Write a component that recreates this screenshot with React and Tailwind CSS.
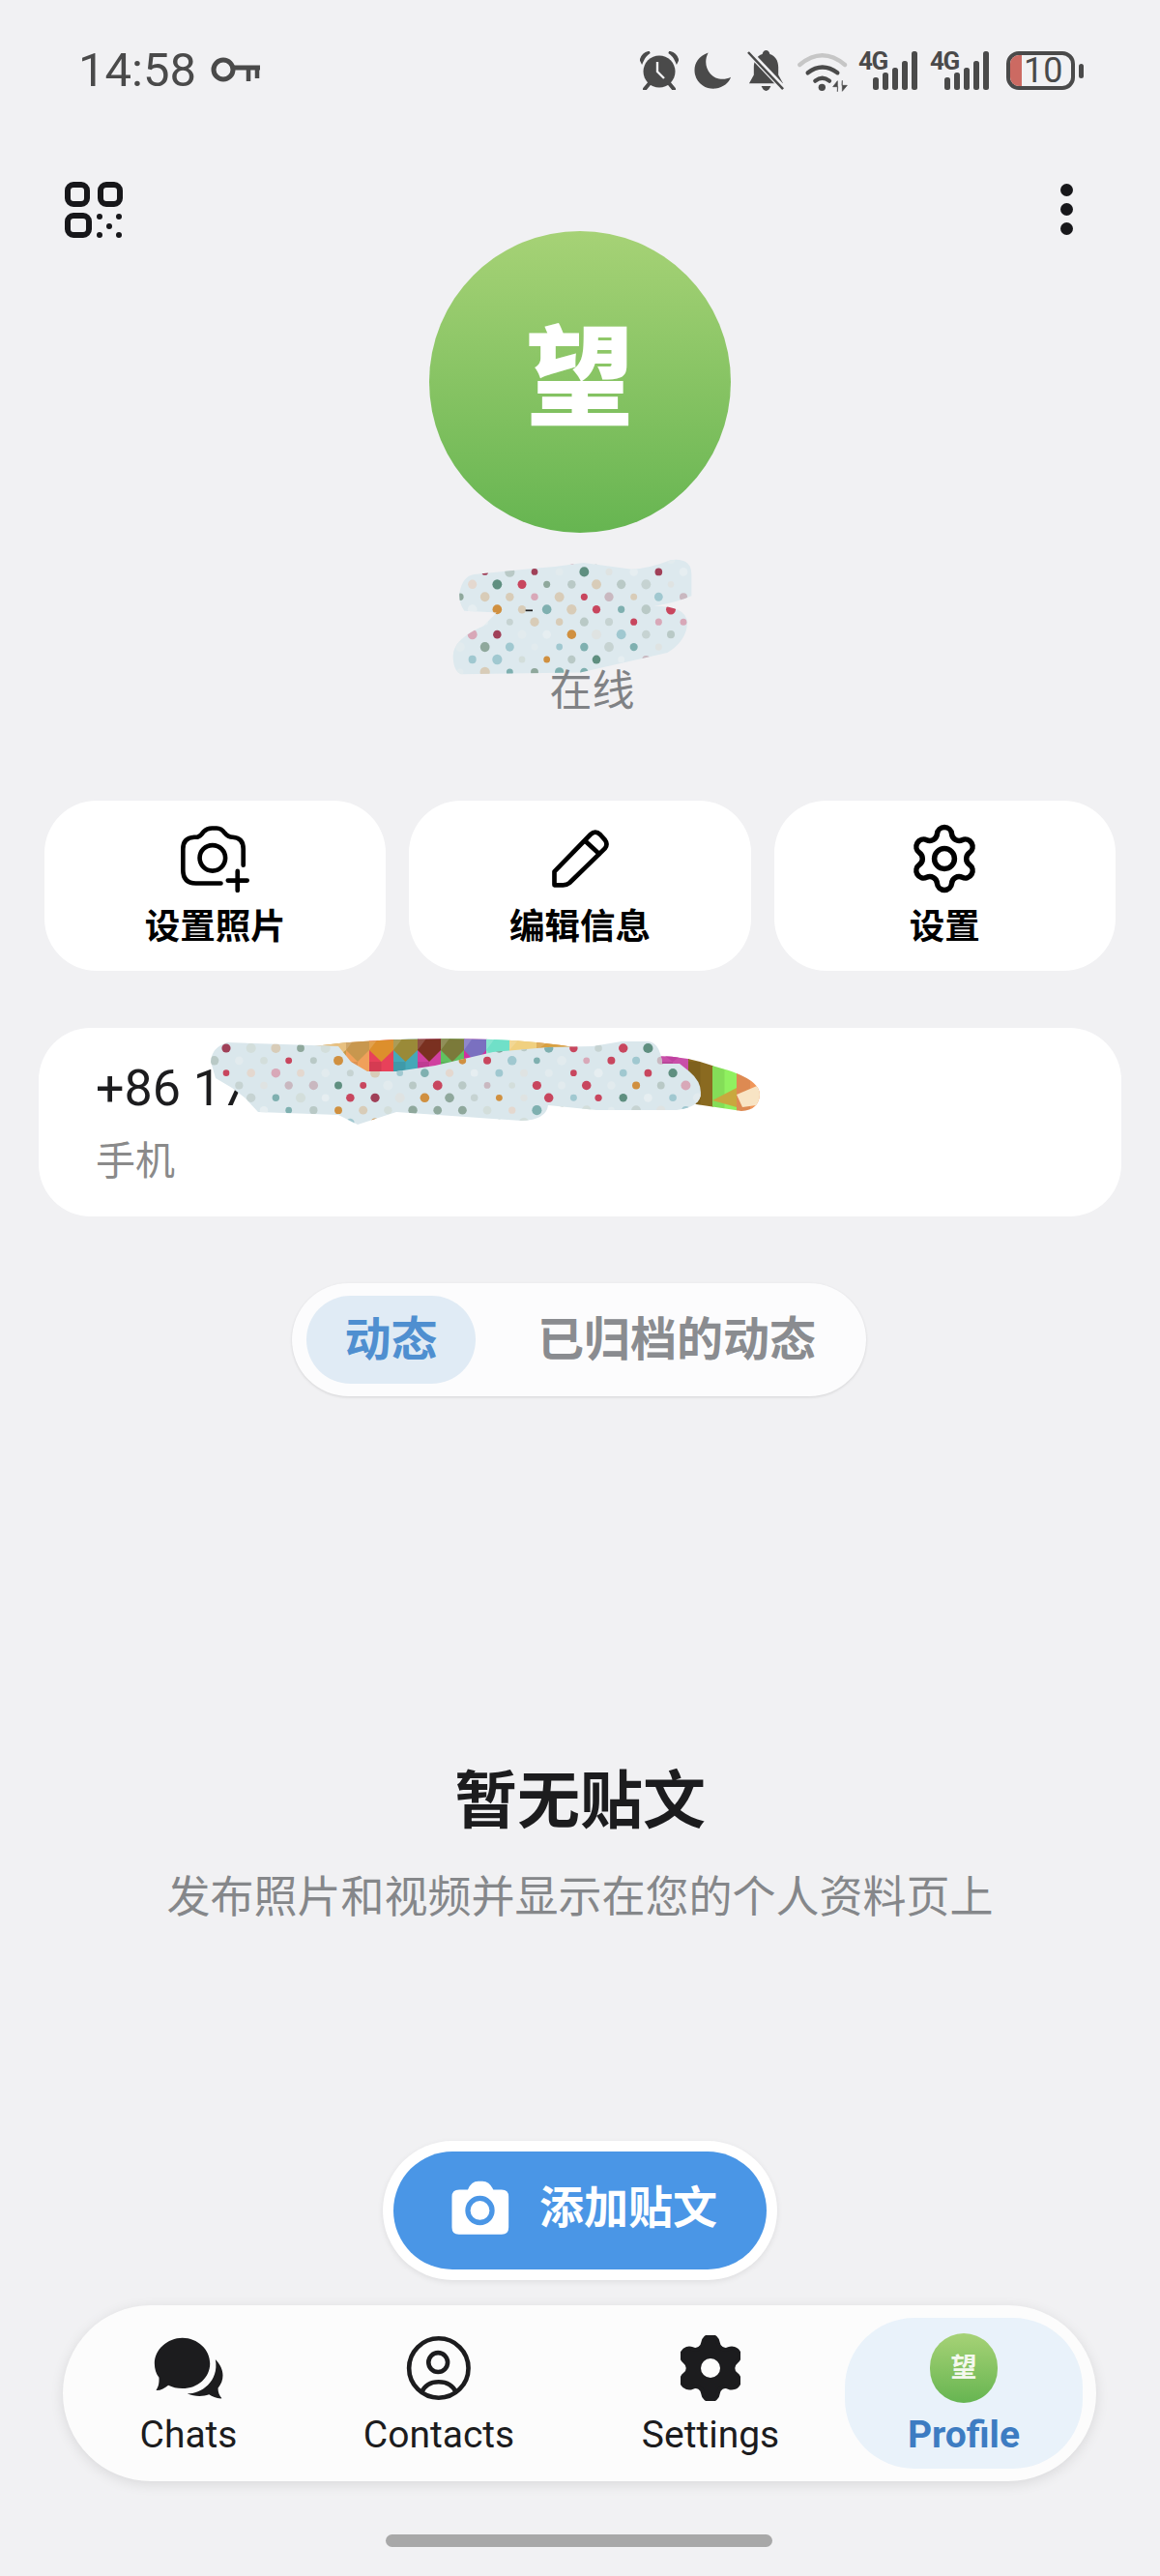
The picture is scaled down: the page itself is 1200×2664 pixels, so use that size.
import React from "react";

const rnd = (i) => {
  const x = Math.sin(i * 127.1 + 311.7) * 43758.5453;
  return x - Math.floor(x);
};
const PAL = ["#c8465e", "#5f8f80", "#8fa89c", "#d09040", "#d8a8b8", "#d8ccb8", "#a0c8d0", "#e6eef1", "#a04058", "#b9c9c6", "#e4d8cf", "#c9b8c0", "#7fb0b0", "#e2ebee", "#d3dedb", "#dfe3e2", "#c6d3d2"];

function Dots({ rows, rowStep, colStep, x0, y0, stagger, radius, seed }) {
  const out = [];
  for (let r = 0; r < rows; r++) {
    for (let c = 0; c < 30; c++) {
      const i = r * 31 + c + seed;
      const cx = x0 + (r % 2 ? 0 : stagger) + c * colStep;
      const cy = y0 + r * rowStep;
      out.push(<circle key={i} cx={cx} cy={cy} r={radius * (0.7 + rnd(i) * 0.4)} fill={PAL[Math.floor(rnd(i + 500) * PAL.length)]} />);
    }
  }
  return out;
}

function NameScribble() {
  const d = "M225 1140 Q235 1090 270 1085 L450 1068 Q530 1062 610 1050 L760 1070 Q820 1065 880 1042 Q945 1035 945 1085 L945 1150 Q900 1170 830 1180 Q930 1180 932 1230 Q930 1285 870 1320 L600 1380 L230 1385 Q205 1375 205 1330 Q205 1280 300 1240 L340 1200 L240 1195 Q222 1170 225 1140Z";
  return (
    <svg viewBox="200 1030 750 360" preserveAspectRatio="none" className="w-[250px] h-[124px] ml-[467px] block">
      <defs>
        <clipPath id="nameclip"><path d={d} /></clipPath>
      </defs>
      <path d={d} fill="#dde9ee" />
      <g clipPath="url(#nameclip)">
        <Dots rows={10} rowStep={37.6} colStep={77} x0={227} y0={1040} stagger={38} radius={14} seed={3} />
      </g>
      <rect x="430" y="1191" width="22" height="5" fill="#222" />
    </svg>
  );
}

function PhoneScribble() {
  const d = "M218 1098 Q219 1083 235 1078 L293 1080 L350 1082 L363 1098 L380 1108 L410 1108 L450 1102 L510 1088 L567 1083 L613 1082 L643 1077 L670 1077 Q683 1078 685 1100 L703 1100 L713 1108 Q725 1118 725 1130 Q725 1145 700 1148 L617 1148 L567 1143 Q565 1158 540 1159 L510 1157 L410 1150 L370 1163 L350 1153 L267 1150 L253 1135 L240 1125 L223 1115Z";
  const band = "M325 1082 Q400 1072 510 1075 Q560 1077 600 1084 L600 1100 L500 1110 L380 1110 L362 1098 L345 1084Z M680 1092 Q710 1092 740 1103 Q786 1115 786 1132 Q785 1148 767 1149 L720 1142 L680 1100Z";
  const cols = [
    [325, 358, "#e8c080", "#c89a48"], [358, 382, "#c8974e", "#f0a05a"], [382, 407, "#dd8f2c", "#e8415a"],
    [407, 432, "#9a8a38", "#45a8b8"], [432, 456, "#7a3020", "#d040a0"], [456, 480, "#7b7a3a", "#60c060"],
    [480, 503, "#7a70c0", "#d030a0"], [503, 527, "#70e0c8", "#8ce8c8"], [527, 555, "#f0d080", "#e8c070"],
    [555, 600, "#d8a040", "#e09050"], [680, 712, "#c040a0", "#c94fa8"], [712, 737, "#e07a3a", "#8a6a20"],
    [737, 762, "#70b030", "#90f060"], [762, 790, "#e8d0d0", "#f0965a"],
  ];
  return (
    <svg viewBox="210 1065 590 110" className="absolute left-[170px] top-[2px] w-[590px] h-[110px]">
      <defs>
        <clipPath id="bandclip"><path d={band} /></clipPath>
        <clipPath id="phoneclip"><path d={d} /></clipPath>
      </defs>
      <g clipPath="url(#bandclip)">
        {cols.map(([a, b, c1, c2], i) => {
          const m = (a + b) / 2;
          return (
            <g key={i}>
              <rect x={a} y="1070" width={b - a + 1} height="90" fill={c2} />
              <polygon points={`${a},1070 ${b},1070 ${b},1086 ${m},1098 ${a},1086`} fill={c1} />
              <polygon points={`${a},1070 ${m},1070 ${a},1086`} fill="#ffffff" fillOpacity="0.16" />
              <polygon points={`${a},1098 ${m},1098 ${m},1160 ${a},1160`} fill="#000000" fillOpacity="0.08" />
            </g>
          );
        })}
        <polygon points="762,1132 790,1120 790,1142 768,1145" fill="#f8e4c4" />
        <polygon points="737,1138 762,1125 762,1145" fill="#c9a83e" />
      </g>
      <path d={d} fill="#dae7ec" />
      <g clipPath="url(#phoneclip)">
        <Dots rows={8} rowStep={12.83} colStep={25.67} x0={221.67} y0={1084} stagger={12.33} radius={4.7} seed={77} />
      </g>
    </svg>
  );
}

const GEAR = "M9.671 4.136a2.34 2.34 0 0 1 4.659 0 2.34 2.34 0 0 0 3.319 1.915 2.34 2.34 0 0 1 2.33 4.033 2.34 2.34 0 0 0 0 3.831 2.34 2.34 0 0 1-2.33 4.033 2.34 2.34 0 0 0-3.319 1.915 2.34 2.34 0 0 1-4.659 0 2.34 2.34 0 0 0-3.32-1.915 2.34 2.34 0 0 1-2.33-4.033 2.34 2.34 0 0 0 0-3.831A2.34 2.34 0 0 1 6.35 6.051a2.34 2.34 0 0 0 3.319-1.915";

function Signal() {
  return (
    <div className="relative w-[62px] h-[42px]">
      <svg viewBox="0 0 62 42" className="absolute left-0 top-0 w-[62px] h-[42px]" fill="#4a4a4a">
        <rect x="15" y="28" width="6" height="13" rx="2.5" />
        <rect x="25" y="23" width="6" height="18" rx="2.5" />
        <rect x="35" y="18" width="6" height="23" rx="2.5" />
        <rect x="45" y="11" width="6" height="30" rx="2.5" />
        <rect x="55" y="1" width="6" height="40" rx="2.5" />
      </svg>
      <span className="absolute left-0 top-0 text-[26px] leading-[22px] font-bold tracking-[-1.5px] text-[#4a4a4a]">4G</span>
    </div>
  );
}

function StatusIcons() {
  return (
    <div className="flex items-center">
      <svg viewBox="0 0 40 40" className="w-[40px] h-[40px]" fill="#4a4a4a">
        <circle cx="20" cy="21" r="16.5" />
        <path d="M1 9 Q3 2 10 1 Q5 4 2 11Z M39 9 Q37 2 30 1 Q35 4 38 11Z" stroke="#4a4a4a" strokeWidth="2.5" />
        <path d="M5 39 L10 33 M35 39 L30 33" stroke="#4a4a4a" strokeWidth="4" strokeLinecap="round" />
        <path d="M18 11 V21 L25 28" stroke="#f1f1f3" strokeWidth="2.4" fill="none" />
      </svg>
      <svg viewBox="0 0 40 40" className="w-[39px] h-[40px] ml-[16px]" fill="#4a4a4a">
        <path d="M15 1 C3 5 -1 15 1 24 C4 36 15 40 23 39 C31 38 37 33 39 27 C31 31 22 29 17 23 C12 17 11 9 15 1Z" />
      </svg>
      <svg viewBox="0 0 40 44" className="w-[39px] h-[43px] ml-[16px]" fill="#4a4a4a">
        <path d="M20 0 Q23 0 24 4 C30 6 33 11 33 18 L33 26 L38 35 L2 35 L7 26 L7 18 C7 11 10 6 16 4 Q17 0 20 0Z" />
        <path d="M15 38 H25 Q23 43 20 43 Q17 43 15 38Z" />
        <path d="M1 1 L38 40" stroke="#f1f1f3" strokeWidth="6.5" />
        <path d="M1 2 L38 41" stroke="#4a4a4a" strokeWidth="2.6" />
      </svg>
      <svg viewBox="615 60 165 135" className="w-[55px] h-[45px] ml-[12px]" fill="none" strokeLinecap="round">
        <path d="M625 108 Q695 50 765 108" stroke="#c6c6c6" strokeWidth="13" />
        <path d="M650 133 Q695 98 742 133" stroke="#4a4a4a" strokeWidth="13" />
        <path d="M673 158 Q695 140 717 158" stroke="#4a4a4a" strokeWidth="13" />
        <circle cx="694" cy="178" r="11" fill="#4a4a4a" />
        <path d="M742 190 V158 L728 176 H742Z M757 158 V190 L772 172 H757Z" fill="#4a4a4a" stroke="#4a4a4a" strokeWidth="2" />
      </svg>
      <div className="ml-[9px]"><Signal /></div>
      <div className="ml-[12px]"><Signal /></div>
      <div className="flex items-center ml-[17px]">
        <div className="relative w-[71px] h-[40px] rounded-[13px] border-[4px] border-[#4a4a4a] overflow-hidden flex items-center">
          <div className="w-[12px] h-full bg-[#cc6a62]" />
          <span className="ml-[2px] text-[36px] leading-[32px] text-[#4a4a4a]">10</span>
        </div>
        <div className="w-[5px] h-[15px] ml-[4px] rounded-full bg-[#4a4a4a]" />
      </div>
    </div>
  );
}

function ActionCard({ icon, label }) {
  return (
    <div className="flex-1 h-[176px] bg-white rounded-[54px] flex flex-col items-center pt-[24px]">
      <div className="h-[72px] flex items-center justify-center">{icon}</div>
      <div className="mt-[16px] text-[36.5px] leading-[37px] font-bold text-black">{label}</div>
    </div>
  );
}

function NavItem({ w, icon, label, active }) {
  return (
    <div className={`${w} flex flex-col items-center pt-[18px] ${active ? "bg-[#e9f2fa] rounded-[72px]" : ""}`}>
      <div className="h-[68px] flex items-center justify-center">{icon}</div>
      <div className={`mt-[12px] text-[39px] leading-[46px] ${active ? "font-bold text-[#3d7cc2]" : "font-[450] text-[#1c1c1e]"}`}>{label}</div>
    </div>
  );
}

export default function App() {
  return (
    <div className="w-[1200px] h-[2664px] overflow-hidden bg-[#f1f1f3] font-['Roboto','Noto_Sans_CJK_SC',sans-serif]">
      {/* status bar */}
      <div className="h-[146px] pl-[81px] pr-[79px] flex items-center justify-between">
        <div className="flex items-center">
          <span className="text-[49px] leading-[50px] text-[#4a4a4a] font-[450]">14:58</span>
          <svg viewBox="0 0 52 30" className="w-[52px] h-[30px] ml-[15px]" fill="none" stroke="#4a4a4a">
            <circle cx="13" cy="14" r="10" strokeWidth="5" />
            <path d="M23 12 H51" strokeWidth="5" />
            <path d="M39 12 V26 M48 12 V23" strokeWidth="4.5" />
          </svg>
        </div>
        <StatusIcons />
      </div>

      {/* header */}
      <div className="grid grid-cols-[1fr_312px_1fr] items-start pt-[42px]">
        <svg viewBox="0 0 60 58" className="ml-[67px] w-[60px] h-[58px]" fill="none" stroke="#17171a" strokeWidth="6">
          <rect x="3" y="3" width="20" height="20" rx="6" />
          <rect x="37" y="3" width="20" height="20" rx="6" />
          <rect x="3" y="35" width="22" height="20" rx="6" />
          <g fill="#17171a" stroke="none">
            <circle cx="36" cy="36" r="3" /><circle cx="56" cy="36" r="3" /><circle cx="46" cy="46" r="3" />
            <circle cx="36" cy="55" r="3" /><circle cx="56" cy="55" r="3" />
          </g>
        </svg>
        <div className="mt-[51px] w-[312px] h-[312px] rounded-full bg-gradient-to-b from-[#a6d276] to-[#66b551] flex items-center justify-center pb-[4px]">
          <span className="text-[112px] leading-[112px] font-black text-white">望</span>
        </div>
        <div className="justify-self-end mr-[90px] mt-[2px] flex flex-col gap-[7px]">
          <div className="w-[13px] h-[13px] rounded-full bg-[#17171a]" />
          <div className="w-[13px] h-[13px] rounded-full bg-[#17171a]" />
          <div className="w-[13px] h-[13px] rounded-full bg-[#17171a]" />
        </div>
      </div>

      <div className="mt-[24px] h-[119px]"><NameScribble /></div>
      <div className="pl-[25px] text-center text-[44px] leading-[42px] text-[#808285]">在线</div>

      {/* action cards */}
      <div className="mt-[92px] px-[46px] flex gap-[24px]">
        <ActionCard
          label="设置照片"
          icon={
            <svg viewBox="50 40 220 210" className="w-[73px] h-[70px]" fill="none" stroke="#000" strokeWidth="14" strokeLinecap="round" strokeLinejoin="round">
              <path d="M178 222 H100 Q60 222 60 180 V115 Q60 80 95 78 H105 Q115 75 125 60 Q135 50 150 50 H165 Q180 50 190 65 Q200 78 215 78 Q248 80 248 115 V165" />
              <circle cx="152" cy="143" r="40" />
              <path d="M200 213 H260 M230 184 V244" />
            </svg>
          }
        />
        <ActionCard
          label="编辑信息"
          icon={
            <svg viewBox="1200 50 185 180" className="w-[62px] h-[60px]" fill="none" stroke="#000" strokeWidth="14" strokeLinecap="round" strokeLinejoin="round">
              <path d="M1213 180 L1325 65 Q1340 50 1355 65 L1370 82 Q1380 95 1370 108 L1260 215 Q1252 222 1240 222 H1213Z" />
              <path d="M1312 88 L1352 125" />
            </svg>
          }
        />
        <ActionCard
          label="设置"
          icon={
            <svg viewBox="0 0 24 24" className="w-[78px] h-[78px]" fill="none" stroke="#000" strokeWidth="1.7" strokeLinecap="round" strokeLinejoin="round">
              <path d={GEAR} />
              <circle cx="12" cy="12" r="3.2" />
            </svg>
          }
        />
      </div>

      {/* phone card */}
      <div className="relative mt-[59px] mx-[40px] h-[195px] bg-white rounded-[54px] pl-[59px] pt-[33px]">
        <div className="text-[52px] leading-[60px] text-[#1c1c1e]">+86 17</div>
        <div className="mt-[25px] text-[41px] leading-[40px] text-[#8a8a8a]">手机</div>
        <PhoneScribble />
      </div>

      {/* tabs */}
      <div className="mt-[69px] ml-[302px] w-[594px] h-[117px] rounded-full bg-[#fcfcfd] shadow-[0_1px_3px_rgba(0,0,0,0.12)] flex items-center pl-[15px]">
        <div className="w-[175px] h-[91px] rounded-[46px] bg-[#e0ebf5] flex items-center justify-center text-[48px] leading-[47px] font-bold text-[#4f8fd0]">动态</div>
        <div className="ml-[64px] text-[48px] leading-[47px] font-bold text-[#8a8c90]">已归档的动态</div>
      </div>

      {/* empty */}
      <div className="mt-[387px] text-center text-[65px] leading-[64px] font-bold text-[#1c1c1e]">暂无贴文</div>
      <div className="mt-[45px] text-center text-[45px] leading-[45px] text-[#85878a]">发布照片和视频并显示在您的个人资料页上</div>

      {/* FAB */}
      <div className="mt-[229px] mx-auto w-[408px] h-[144px] rounded-full bg-white p-[11px] shadow-[0_2px_6px_rgba(0,0,0,0.08)]">
        <div className="h-full rounded-full bg-[#4a96e6] flex items-center pl-[58px] pb-[5px]">
          <svg viewBox="255 150 190 185" className="w-[63px] h-[61px]">
            <path fill="#fff" d="M285 185 H312 Q322 158 345 158 H358 Q380 158 392 185 H418 Q440 185 440 207 V303 Q440 325 418 325 H284 Q262 325 262 303 V207 Q262 185 285 185Z" />
            <circle cx="350" cy="250" r="38" fill="#fff" stroke="#4a96e6" strokeWidth="16" />
          </svg>
          <span className="ml-[30px] text-[46px] leading-[45px] font-bold text-white">添加贴文</span>
        </div>
      </div>

      {/* nav */}
      <div className="mt-[26px] ml-[65px] w-[1069px] h-[182px] rounded-[91px] bg-[#fcfcfc] shadow-[0_3px_14px_rgba(0,0,0,0.1)] flex py-[13px] pl-[13px]">
        <NavItem
          w="w-[234px]"
          label="Chats"
          icon={
            <svg viewBox="55 40 225 205" className="w-[75px] h-[68px]" fill="#1c1c1e">
              <path d="M147 48 C195 48 233 85 233 128 C233 172 195 206 147 206 C130 206 115 202 103 196 C92 205 78 213 65 212 C72 200 75 190 74 172 C65 160 60 145 60 128 C60 85 100 48 147 48Z" />
              <path d="M250 115 C265 130 273 148 273 165 C273 180 268 192 258 205 C258 218 262 228 270 237 C255 238 240 232 230 225 C210 232 185 232 162 222 C205 222 262 185 250 115Z" />
            </svg>
          }
        />
        <NavItem
          w="w-[284px]"
          label="Contacts"
          icon={
            <svg viewBox="840 42 205 206" className="w-[68px] h-[68px]" fill="none" stroke="#1c1c1e" strokeWidth="14">
              <circle cx="942" cy="145" r="93" />
              <circle cx="940" cy="127" r="30" />
              <path d="M888 222 Q902 188 942 188 Q982 188 997 222" />
            </svg>
          }
        />
        <NavItem
          w="w-[278px]"
          label="Settings"
          icon={
            <svg viewBox="2.8 1.8 18.4 20.4" className="w-[62px] h-[68px]">
              <path d={GEAR} fill="#1c1c1e" stroke="#1c1c1e" strokeWidth="1.2" />
              <circle cx="12" cy="12" r="3" fill="#fcfcfc" />
            </svg>
          }
        />
        <NavItem
          w="w-[246px]"
          active
          label="Profile"
          icon={
            <div className="w-[70px] h-[72px] rounded-full bg-gradient-to-b from-[#a6d276] to-[#66b551] flex items-center justify-center">
              <span className="text-[27px] leading-[27px] font-bold text-[#f4f8ee]">望</span>
            </div>
          }
        />
      </div>

      {/* home indicator */}
      <div className="mt-[55px] ml-[399px] w-[400px] h-[13px] rounded-full bg-[#a8a8a8]" />
    </div>
  );
}
